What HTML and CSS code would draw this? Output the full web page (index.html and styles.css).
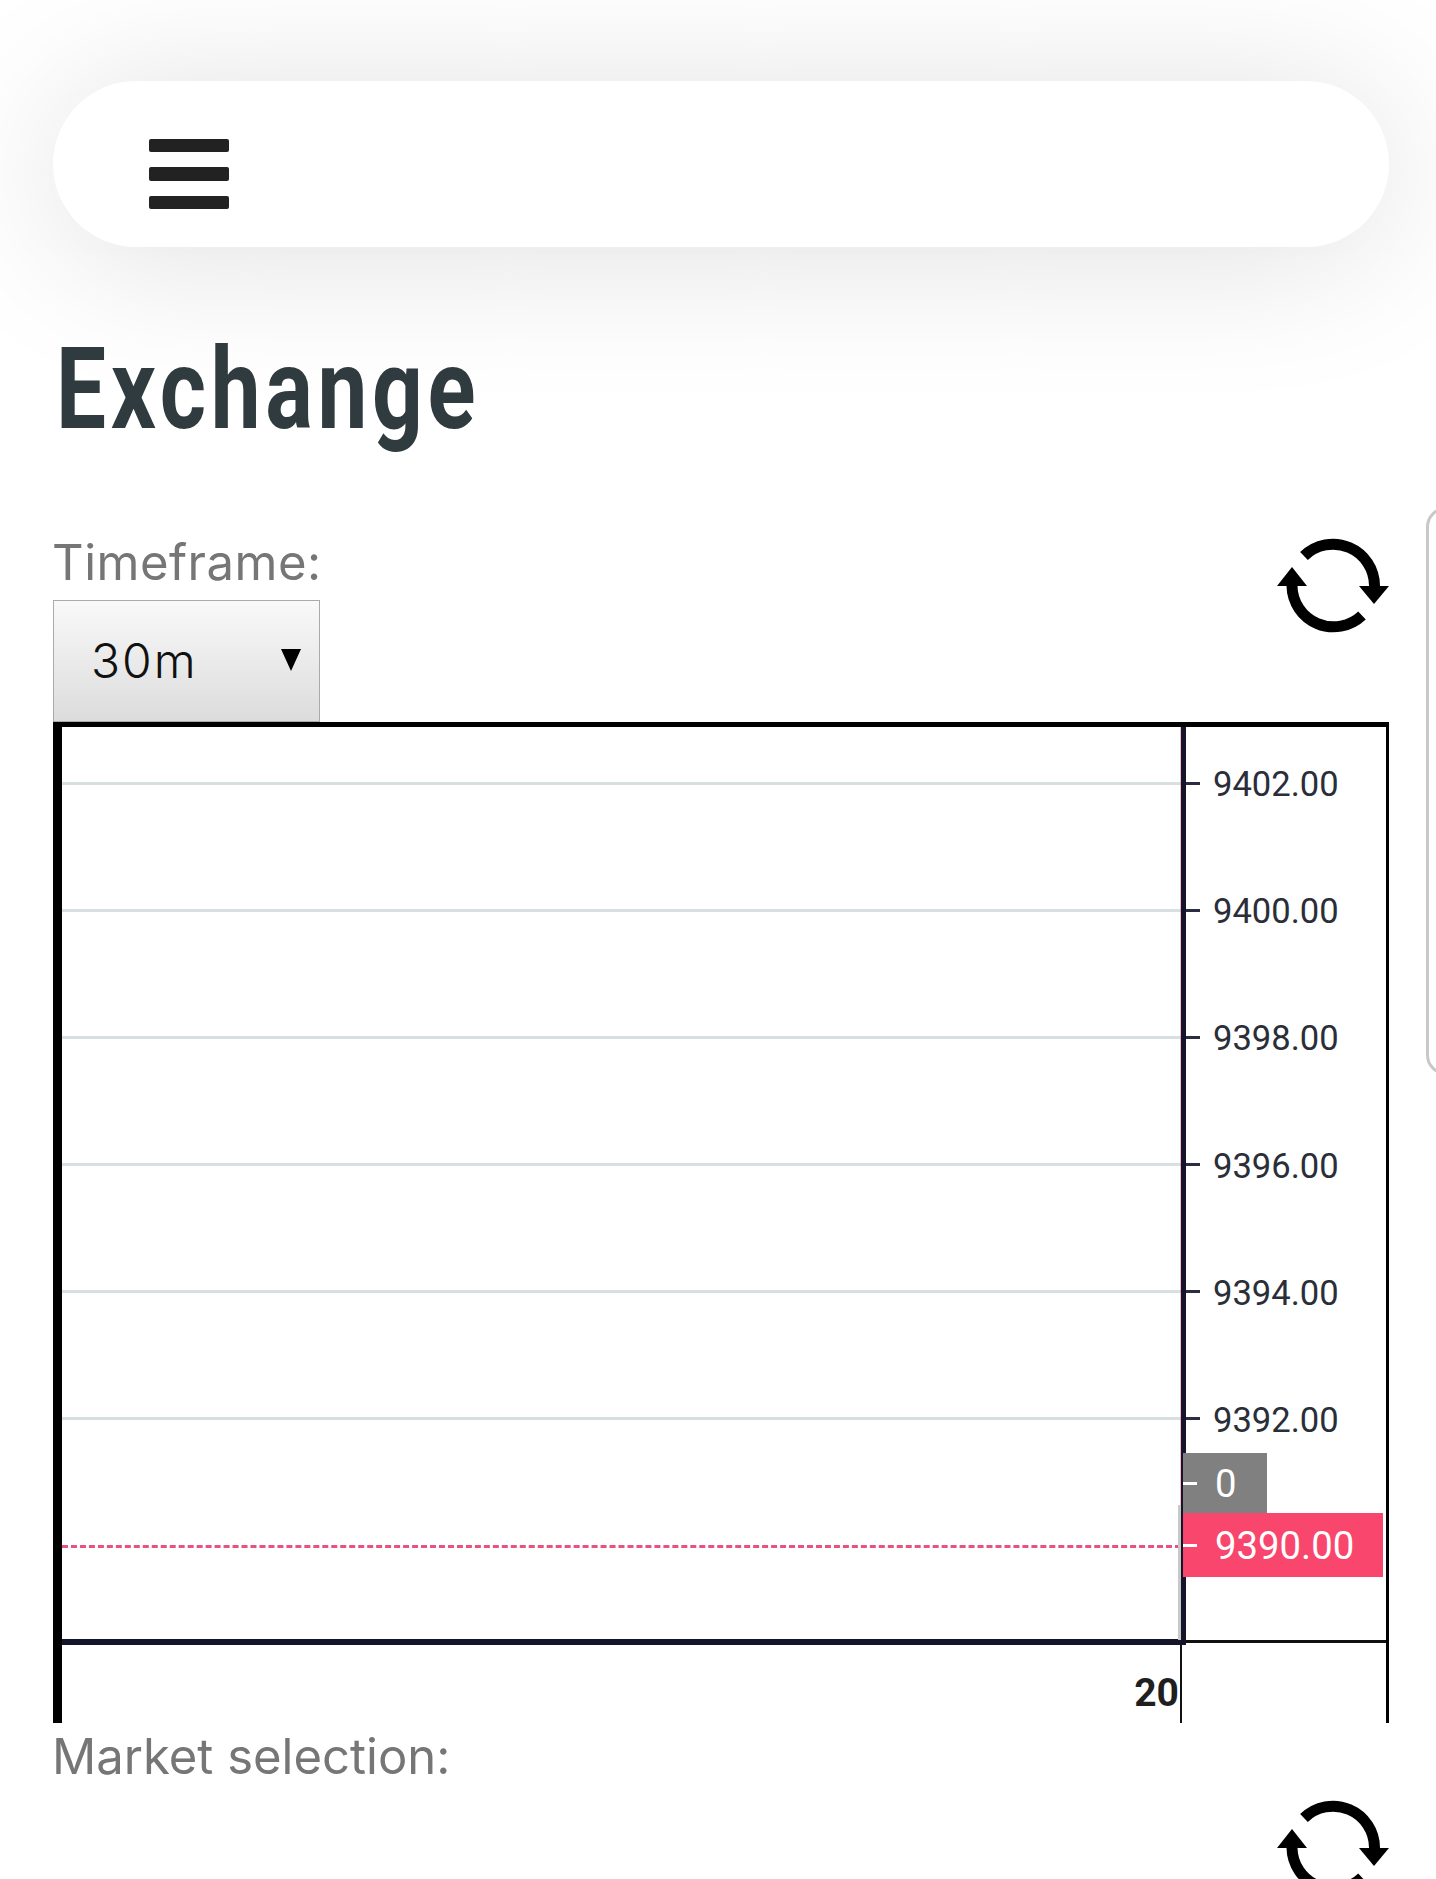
FILE: index.html
```html
<!DOCTYPE html>
<html lang="en">
<head>
<meta charset="utf-8">
<title>Exchange</title>
<link rel="stylesheet" href="styles.css">
</head>
<body>
<div class="page">
  <header class="topbar">
    <button class="burger" aria-label="Menu"><span></span><span></span><span></span></button>
  </header>
  <h1 class="title">Exchange</h1>
  <section class="controls">
    <div class="field">
      <div class="label">Timeframe:</div>
      <div class="select"><span>30m</span><i class="caret"></i></div>
    </div>
    <svg class="refresh" viewBox="0 0 112 95" aria-hidden="true">
      <path class="arc" d="M27 18A41.5 41.5 0 0 1 97.5 48"/>
      <path class="arc" d="M85 77.5A41.5 41.5 0 0 1 15 48"/>
      <path d="M82 48H112L97 66Z"/>
      <path d="M0 48H30L15 29Z"/>
    </svg>
  </section>
  <section class="chart">
    <div class="chart-body">
      <div class="plot">
        <div class="grid-row first"></div>
        <div class="grid-row"></div>
        <div class="grid-row"></div>
        <div class="grid-row"></div>
        <div class="grid-row"></div>
        <div class="grid-row"></div>
        <div class="grid-row last"></div>
      </div>
      <div class="axis">
        <div class="price"><i class="tick"></i><span>9402.00</span></div>
        <div class="price"><i class="tick"></i><span>9400.00</span></div>
        <div class="price"><i class="tick"></i><span>9398.00</span></div>
        <div class="price"><i class="tick"></i><span>9396.00</span></div>
        <div class="price"><i class="tick"></i><span>9394.00</span></div>
        <div class="price"><i class="tick"></i><span>9392.00</span></div>
        <div class="badge grey"><i class="tick"></i><span>0</span></div>
        <div class="badge pink"><i class="tick"></i><span>9390.00</span></div>
      </div>
    </div>
    <div class="time-row">
      <div class="time-cell">20</div>
    </div>
  </section>
  <section class="market">
    <div class="label">Market selection:</div>
    <svg class="refresh" viewBox="0 0 112 95" aria-hidden="true">
      <path class="arc" d="M27 18A41.5 41.5 0 0 1 97.5 48"/>
      <path class="arc" d="M85 77.5A41.5 41.5 0 0 1 15 48"/>
      <path d="M82 48H112L97 66Z"/>
      <path d="M0 48H30L15 29Z"/>
    </svg>
  </section>
</div>
<div class="edge-panel"></div>
</body>
</html>
```
FILE: styles.css
```css
html, body { margin: 0; padding: 0; background: #fff; }
body { height: 1879px; overflow: hidden; position: relative; }
.page { padding: 81px 47px 0 53px; }

.topbar {
  height: 166px;
  border-radius: 83px;
  background: #fff;
  box-shadow: 0 10px 150px rgba(0, 0, 0, .13);
  display: flex;
  align-items: center;
  padding: 20px 0 0 96px;
  box-sizing: border-box;
}
.burger {
  display: flex; flex-direction: column; gap: 15px;
  padding: 0; border: 0; background: none;
}
.burger span { display: block; width: 80px; height: 13.5px; border-radius: 2px; background: #222; }

.title {
  margin: 77px 0 0 3px;
  font: 700 114px/130px "Roboto", sans-serif;
  letter-spacing: 6px;
  color: #2f3b3f;
  transform: scaleX(.78);
  transform-origin: left center;
}

.controls { display: flex; justify-content: space-between; align-items: flex-start; margin-top: 81px; }
.label {
  margin-left: -1px;
  font: 400 49px/56px "Inter", sans-serif;
  color: #767676;
}
.field .label { height: 65px; letter-spacing: .5px; }
.select {
  box-sizing: border-box;
  width: 267px; height: 122px;
  border: 1px solid #aaa;
  background: linear-gradient(#f9f9f9, #dcdcdc);
  display: flex; align-items: center; justify-content: space-between;
  padding: 0 18px 0 37px;
  font: 300 48px/1 "Inter", sans-serif;
  letter-spacing: 2px;
  color: #111;
}
.caret {
  width: 0; height: 0; margin-bottom: 2px;
  border-left: 10.5px solid transparent;
  border-right: 10.5px solid transparent;
  border-top: 22px solid #000;
}
.refresh { display: block; width: 112px; height: 95px; flex: none; }
.controls .refresh { margin-top: 3px; }
.refresh path { fill: #000; }
.refresh path.arc { fill: none; stroke: #000; stroke-width: 11; }

.chart {
  box-sizing: border-box;
  height: 1001px;
  border-top: 5px solid #000;
  border-left: 9px solid #000;
  border-right: 3px solid #000;
  font-family: "Roboto", sans-serif;
}
.chart-body { display: flex; align-items: flex-start; height: 918px; }
.plot {
  box-sizing: border-box;
  position: relative;
  width: 1124px; height: 918px;
  border-right: 5px solid #14142a;
  border-bottom: 6px solid #14142a;
}
.plot::before, .plot::after { content: ""; position: absolute; right: 0; }
.plot::before { top: 0; width: 1.5px; height: 778px; background: rgba(240, 100, 130, .45); }
.plot::after { top: 778px; width: 3px; height: 135px; background: #c8c8c8; }
.grid-row { box-sizing: border-box; height: 127.2px; border-bottom: 3px solid #d8dfe1; }
.grid-row.first { height: 57.5px; }
.grid-row.last { border-bottom: 3px dashed #e8527e; }

.axis {
  box-sizing: border-box;
  position: relative;
  flex: 1; height: 916px;
  padding-top: 37px;
  border-bottom: 3px solid #111;
}
.price {
  height: 127.2px;
  display: flex; align-items: flex-start; gap: 13px;
  font-size: 34.6px; line-height: 40px; color: #2a2e39;
}
.tick { display: block; flex: none; width: 14px; height: 3px; margin-top: 17.5px; background: #2b2b43; }

.badge {
  box-sizing: border-box;
  position: absolute; left: -3px;
  display: flex; align-items: center; gap: 18px;
  color: #fff; font-size: 38.3px;
}
.badge .tick { margin-top: 0; background: #fff; }
.badge.grey { top: 726px; width: 84px; height: 60px; background: #808080; }
.badge.pink { top: 786px; width: 200px; height: 64px; background: #f9466c; }

.time-row { display: flex; height: 78px; }
.time-cell {
  box-sizing: border-box;
  width: 1120px; height: 78px;
  border-right: 2px solid #111;
  text-align: right;
  padding: 26px 1px 0 0;
  font-weight: 700; font-size: 39px; line-height: 44px; color: #1f1f1f;
}

.market { display: flex; flex-direction: column; }
.market .label { margin-top: 6px; height: 56px; }
.market .refresh { align-self: flex-end; margin-top: 15px; }

.edge-panel {
  position: absolute;
  left: 1426px; right: -30px; top: 507px; height: 568px;
  box-sizing: border-box;
  background: #fff;
  border: 3px solid #c8c8c8;
  border-radius: 24px;
}
```
